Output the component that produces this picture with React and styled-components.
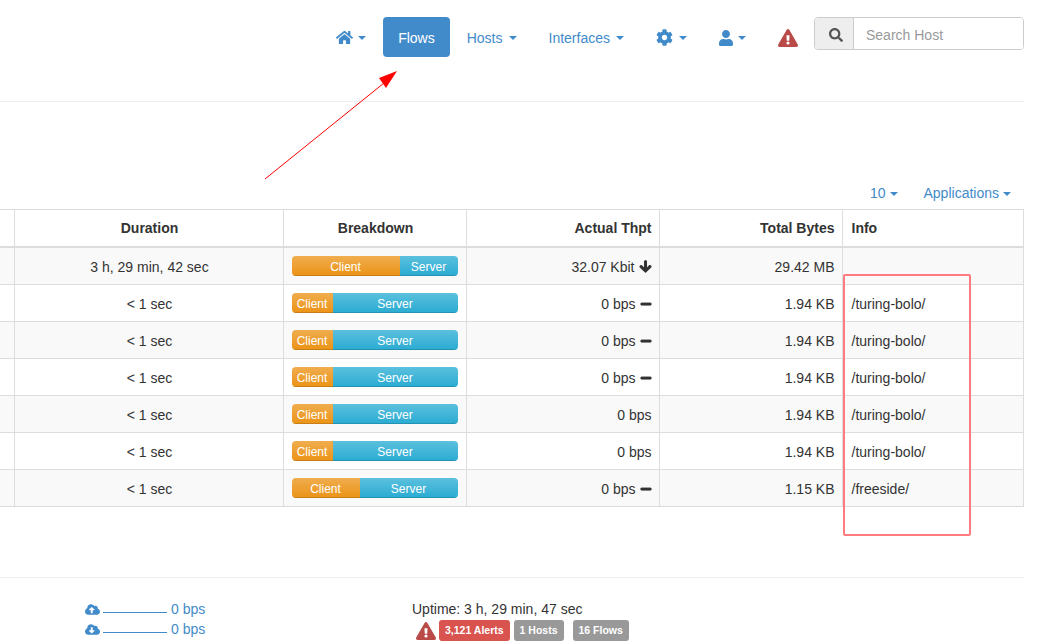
import React from "react";
import styled, { createGlobalStyle } from "styled-components";
import {
  FaHome,
  FaCog,
  FaUser,
  FaExclamationTriangle,
  FaSearch,
  FaArrowDown,
  FaMinus,
  FaCloudUploadAlt,
  FaCloudDownloadAlt,
} from "react-icons/fa";

const GlobalStyle = createGlobalStyle`
  html, body {
    margin: 0;
    padding: 0;
    background: #fff;
    overflow: hidden;
  }
  body {
    font-family: "Liberation Sans", Arial, sans-serif;
    font-size: 14px;
    line-height: 20px;
    color: #333;
  }
`;

const Page = styled.div`
  position: relative;
  width: 1041px;
  height: 641px;
  overflow: hidden;
`;

const Navbar = styled.nav`
  display: flex;
  justify-content: flex-end;
  align-items: flex-start;
  gap: 2px;
  box-sizing: border-box;
  width: 1024px;
  height: 102px;
  padding-top: 17px;
  border-bottom: 1px solid #eee;
`;

const NavLink = styled.a`
  display: flex;
  align-items: center;
  box-sizing: border-box;
  height: 40px;
  padding: 1px 15px 0;
  border-radius: 4px;
  color: ${(p) => (p.$active ? "#fff" : "#428bca")};
  background: ${(p) => (p.$active ? "#428bca" : "transparent")};
`;

const Caret = styled.span`
  display: inline-block;
  vertical-align: middle;
  width: 0;
  height: 0;
  margin-left: ${(p) => p.$gap || 6}px;
  border-top: 4px solid currentColor;
  border-left: 4px solid transparent;
  border-right: 4px solid transparent;
`;

const UserIcon = styled(FaUser)`
  width: 14px;
  height: 18px;
`;

const AlertMark = styled(FaExclamationTriangle)`
  color: #b94a48;
  font-size: ${(p) => p.$size}px;
`;

const SearchGroup = styled.div`
  display: flex;
  box-sizing: border-box;
  width: 210px;
  height: 33px;
  margin-left: -1px;
  border: 1px solid #ccc;
  border-radius: 4px;
  overflow: hidden;
`;

const SearchAddon = styled.span`
  display: flex;
  align-items: center;
  justify-content: center;
  box-sizing: border-box;
  width: 39px;
  padding: 2px 0 0 3px;
  background: #eee;
  border-right: 1px solid #ccc;
  font-size: 14px;
  color: #555;
`;

const SearchInput = styled.input`
  flex: 1;
  min-width: 0;
  border: 0;
  outline: 0;
  padding: 2px 12px 0;
  font: inherit;
  color: #555;
  &::placeholder {
    color: #999;
    opacity: 1;
  }
`;

const Toolbar = styled.div`
  display: flex;
  justify-content: flex-end;
  align-items: center;
  gap: 26px;
  box-sizing: border-box;
  width: 1024px;
  height: 107px;
  padding: 81px 13px 6px 0;
`;

const ToolbarLink = styled.a`
  color: #428bca;
`;

const FlowTable = styled.table`
  table-layout: fixed;
  width: 1023px;
  border-collapse: collapse;
`;

const textPadding = {
  center: "9px 7px 7px 9px",
  right: "9px 7px 7px 8px",
  left: "9px 8px 7px 9px",
};

const headPadding = {
  center: "8px 7px 8px 9px",
  right: "8px 7px 8px 8px",
  left: "8px 8px 8px 9px",
};

const HeadCell = styled.th`
  box-sizing: border-box;
  height: 37px;
  padding: ${(p) => headPadding[p.$align || "center"]};
  border: 1px solid #ddd;
  border-bottom: 2px solid #ddd;
  font-weight: bold;
  text-align: ${(p) => p.$align || "center"};
  &:first-child {
    border-left: 0;
  }
`;

const Row = styled.tr`
  background: ${(p) => (p.$striped ? "#f9f9f9" : "#fff")};
`;

const Cell = styled.td`
  box-sizing: border-box;
  height: 37px;
  padding: ${(p) => (p.$align ? textPadding[p.$align] : "8px")};
  border: 1px solid #ddd;
  text-align: ${(p) => p.$align || "left"};
  &:first-child {
    border-left: 0;
  }
`;

const TrendIcon = styled.span`
  display: inline-block;
  height: 12px;
  margin-left: 4px;
  line-height: 0;
  vertical-align: -1px;
  color: #333;
  svg {
    stroke: currentColor;
    stroke-width: ${(p) => p.$stroke}px;
  }
`;

const Bar = styled.div`
  display: flex;
  height: 20px;
  border-radius: 4px;
  overflow: hidden;
  font-size: 12px;
  line-height: 22px;
  color: #fff;
  text-align: center;
`;

const ClientPart = styled.div`
  background: linear-gradient(to bottom, #f0ad4e 0%, #eb9316 100%);
  box-shadow: inset 0 -1px 0 rgba(0, 0, 0, 0.15);
`;

const ServerPart = styled.div`
  flex: 1;
  background: linear-gradient(to bottom, #5bc0de 0%, #2aabd2 100%);
  box-shadow: inset 0 -1px 0 rgba(0, 0, 0, 0.15);
`;

const Footer = styled.footer`
  display: flex;
  box-sizing: border-box;
  width: 1024px;
  margin-top: 70px;
  padding: 21px 0 0 85px;
  border-top: 1px solid #eee;
`;

const Bandwidth = styled.div`
  width: 327px;
  color: #428bca;
`;

const BandwidthLine = styled.div`
  display: flex;
  align-items: center;
  height: 20px;
`;

const CloudIcon = styled.span`
  display: inline-flex;
  width: 18px;
`;

const Spark = styled.span`
  display: inline-block;
  align-self: flex-start;
  width: 64px;
  height: 13px;
  margin-right: 4px;
  border-bottom: 1px solid #428bca;
`;

const Status = styled.div`
  display: flex;
  flex-direction: column;
`;

const Badges = styled.div`
  display: flex;
  align-items: center;
  padding: 1px 0 0 4px;
`;

const Badge = styled.span`
  box-sizing: border-box;
  height: 21px;
  margin-left: ${(p) => p.$gap}px;
  padding: 0 6px;
  border-radius: 3px;
  background: ${(p) => p.$bg};
  color: #fff;
  font-size: 10.5px;
  font-weight: bold;
  line-height: 21px;
`;

const Arrow = styled.svg`
  position: absolute;
  left: 0;
  top: 0;
  pointer-events: none;
`;

const Highlight = styled.div`
  position: absolute;
  left: 843px;
  top: 274px;
  box-sizing: border-box;
  width: 128px;
  height: 262px;
  border: 2px solid #ff7b80;
  border-radius: 2px;
  pointer-events: none;
`;

const columns = [
  { label: "", width: 14 },
  { label: "Duration", width: 269 },
  { label: "Breakdown", width: 183 },
  { label: "Actual Thpt", width: 193, align: "right" },
  { label: "Total Bytes", width: 183, align: "right" },
  { label: "Info", width: 181, align: "left" },
];

const flows = [
  { duration: "3 h, 29 min, 42 sec", client: 108, thpt: "32.07 Kbit", trend: "down", bytes: "29.42 MB", info: "" },
  { duration: "< 1 sec", client: 41, thpt: "0 bps", trend: "flat", bytes: "1.94 KB", info: "/turing-bolo/" },
  { duration: "< 1 sec", client: 41, thpt: "0 bps", trend: "flat", bytes: "1.94 KB", info: "/turing-bolo/" },
  { duration: "< 1 sec", client: 41, thpt: "0 bps", trend: "flat", bytes: "1.94 KB", info: "/turing-bolo/" },
  { duration: "< 1 sec", client: 41, thpt: "0 bps", bytes: "1.94 KB", info: "/turing-bolo/" },
  { duration: "< 1 sec", client: 41, thpt: "0 bps", bytes: "1.94 KB", info: "/turing-bolo/" },
  { duration: "< 1 sec", client: 68, thpt: "0 bps", trend: "flat", bytes: "1.15 KB", info: "/freeside/" },
];

export default function App() {
  return (
    <Page>
      <GlobalStyle />
      <Navbar>
        <NavLink><FaHome size={17} /><Caret $gap={5} /></NavLink>
        <NavLink $active>Flows</NavLink>
        <NavLink>Hosts<Caret /></NavLink>
        <NavLink>Interfaces<Caret /></NavLink>
        <NavLink><FaCog size={17} /><Caret /></NavLink>
        <NavLink><UserIcon /><Caret $gap={5} /></NavLink>
        <NavLink><AlertMark $size={20} /></NavLink>
        <SearchGroup>
          <SearchAddon><FaSearch /></SearchAddon>
          <SearchInput placeholder="Search Host" />
        </SearchGroup>
      </Navbar>

      <Toolbar>
        <ToolbarLink>10<Caret $gap={4} /></ToolbarLink>
        <ToolbarLink>Applications<Caret $gap={4} /></ToolbarLink>
      </Toolbar>

      <FlowTable>
        <colgroup>
          {columns.map((c, i) => <col key={i} style={{ width: c.width }} />)}
        </colgroup>
        <thead>
          <tr>
            {columns.map((c, i) => <HeadCell key={i} $align={c.align}>{c.label}</HeadCell>)}
          </tr>
        </thead>
        <tbody>
          {flows.map((f, i) => (
            <Row key={i} $striped={i % 2 === 0}>
              <Cell />
              <Cell $align="center">{f.duration}</Cell>
              <Cell>
                <Bar>
                  <ClientPart style={{ width: f.client }}>Client</ClientPart>
                  <ServerPart>Server</ServerPart>
                </Bar>
              </Cell>
              <Cell $align="right">
                {f.thpt}
                {f.trend === "down" && <TrendIcon $stroke={40}><FaArrowDown size={13} /></TrendIcon>}
                {f.trend === "flat" && <TrendIcon $stroke={30}><FaMinus size={12} /></TrendIcon>}
              </Cell>
              <Cell $align="right">{f.bytes}</Cell>
              <Cell $align="left">{f.info}</Cell>
            </Row>
          ))}
        </tbody>
      </FlowTable>

      <Footer>
        <Bandwidth>
          <BandwidthLine><CloudIcon><FaCloudUploadAlt size={15} /></CloudIcon><Spark />0 bps</BandwidthLine>
          <BandwidthLine><CloudIcon><FaCloudDownloadAlt size={15} /></CloudIcon><Spark />0 bps</BandwidthLine>
        </Bandwidth>
        <Status>
          <div>Uptime: 3 h, 29 min, 47 sec</div>
          <Badges>
            <AlertMark $size={20} />
            <Badge $bg="#d9534f" $gap={3}>3,121 Alerts</Badge>
            <Badge $bg="#999" $gap={4}>1 Hosts</Badge>
            <Badge $bg="#999" $gap={9}>16 Flows</Badge>
          </Badges>
        </Status>
      </Footer>

      <Arrow width="1041" height="641">
        <line x1="265" y1="179" x2="384" y2="83" stroke="#f00" strokeWidth="1" />
        <polygon points="397,71 379,78 386,88" fill="#f00" />
      </Arrow>
      <Highlight />
    </Page>
  );
}
